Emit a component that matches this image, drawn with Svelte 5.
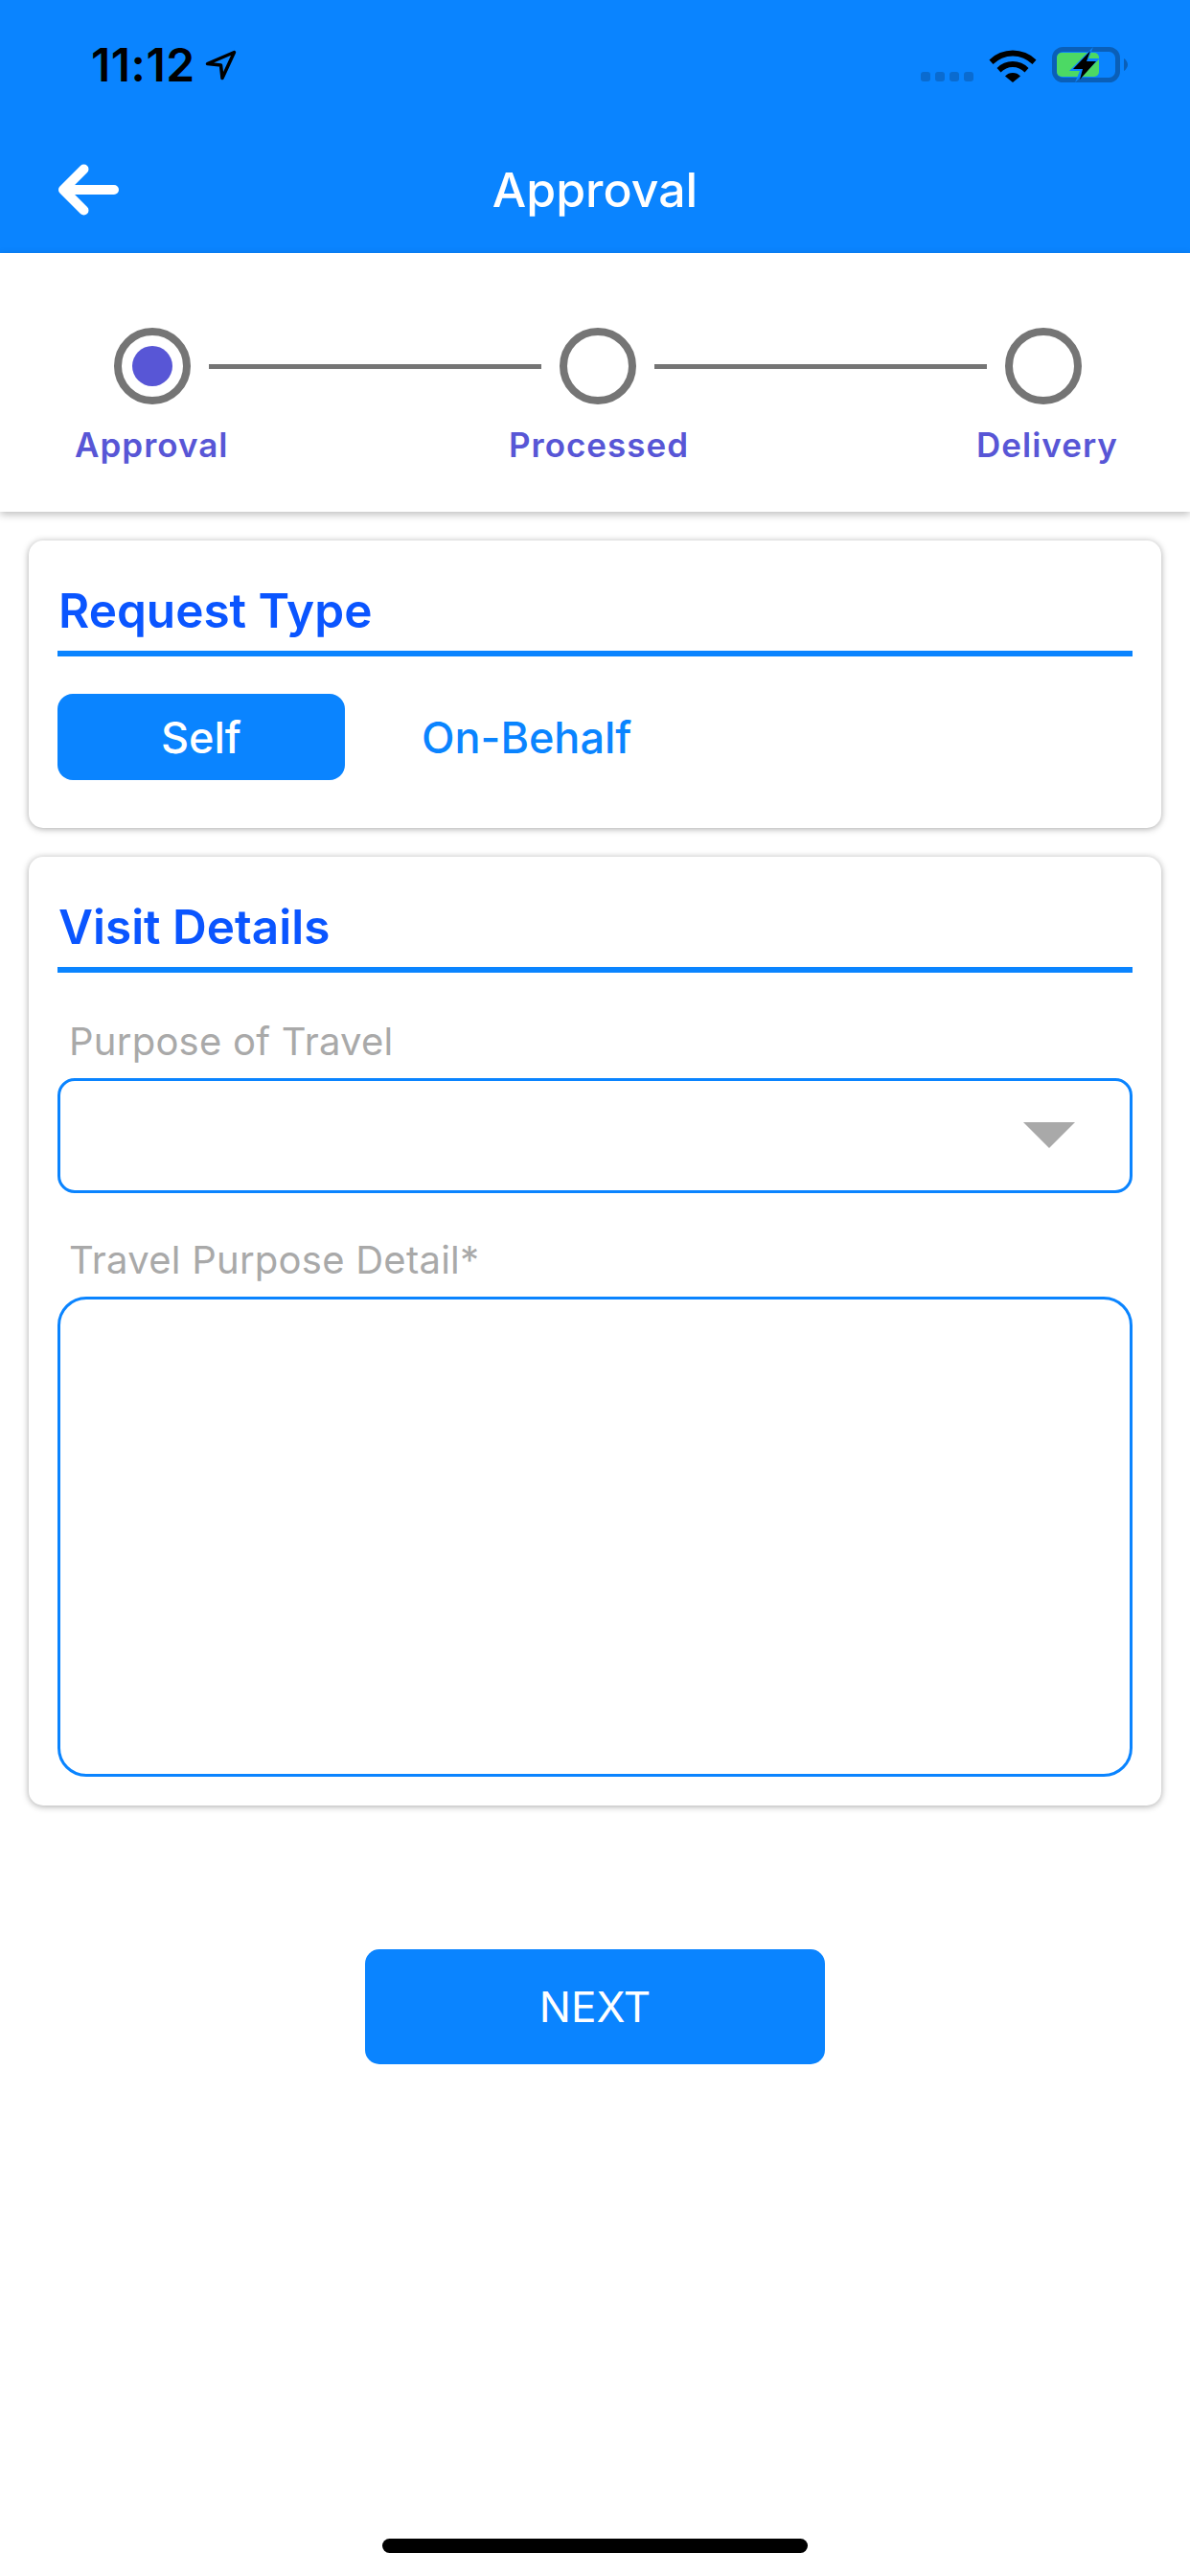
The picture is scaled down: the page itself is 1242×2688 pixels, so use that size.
<script>
  const steps = [
    { label: 'Approval', active: true },
    { label: 'Processed', active: false },
    { label: 'Delivery', active: false }
  ];
</script>

<div class="screen">
  <header class="appbar">
    <div class="status">
      <div class="status-left">
        <span class="time">11:12</span>
        <svg class="loc" width="34" height="32" viewBox="0 0 34 32">
          <path d="M30.500 2.500 L2.500 14.500 L16.500 16 L18 29.500 Z" fill="none" stroke="#000" stroke-width="3.500" stroke-linejoin="round" />
        </svg>
      </div>
      <div class="status-right">
        <div class="signal"><i></i><i></i><i></i><i></i></div>
        <svg width="50" height="37" viewBox="0 0 50 37">
          <path d="M0.500 13.500 A35 35 0 0 1 49.500 13.500 L45.500 18 A29 29 0 0 0 4.500 18 Z" fill="#000" />
          <path d="M8.500 22 A23 23 0 0 1 41.500 22 L37.500 26.500 A17 17 0 0 0 12.500 26.500 Z" fill="#000" />
          <path d="M17 30.500 A11 11 0 0 1 33 30.500 L25 37 Z" fill="#000" />
        </svg>
        <svg class="battery" width="79" height="37" viewBox="0 0 79 37">
          <rect x="2.500" y="2.500" width="66" height="32" rx="9" fill="none" stroke="#0a5fb8" stroke-width="5" />
          <path d="M75 12 C77 13 79 16 79 18.500 C79 21 77 24 75 25 Z" fill="#0a5fb8" />
          <rect x="5" y="6" width="44" height="25" rx="5" fill="#4cd964" />
          <path d="M43 0 L18 25 L29 25 L24 37 L50 12 L38 12 Z" fill="#0a84ff" />
          <path d="M40 4 L22 23 L32 23 L29 34 L46 15 L36 15 Z" fill="#000" />
        </svg>
      </div>
    </div>
    <div class="nav">
      <svg class="back" width="64" height="56" viewBox="0 0 64 56">
        <path d="M27.500 6.500 L6 28 L27.500 49.500 M6 28 L59 28" fill="none" stroke="#fff" stroke-width="10" stroke-linecap="round" stroke-linejoin="round" />
      </svg>
      <h1>Approval</h1>
    </div>
  </header>

  <section class="stepper">
    <div class="track">
      {#each steps as step, i}
        {#if i > 0}<span class="line"></span>{/if}
        <span class="circle">
          {#if step.active}<span class="dot"></span>{/if}
        </span>
      {/each}
    </div>
    <div class="labels">
      {#each steps as step}
        <span>{step.label}</span>
      {/each}
    </div>
  </section>

  <main class="content">
    <section class="card request">
      <h2>Request Type</h2>
      <div class="toggle">
        <button type="button" class="pill selected">Self</button>
        <button type="button" class="pill">On-Behalf</button>
      </div>
    </section>

    <section class="card details">
      <h2>Visit Details</h2>
      <div class="field-label first">Purpose of Travel</div>
      <div class="select">
        <span class="caret"></span>
      </div>
      <div class="field-label">Travel Purpose Detail*</div>
      <div class="textarea"></div>
    </section>

    <button type="button" class="next">NEXT</button>
  </main>

  <div class="home"></div>
</div>

<style>
  :global(body) {
    margin: 0;
    background: #fff;
  }

  .screen {
    width: 1242px;
    height: 2688px;
    display: flex;
    flex-direction: column;
    background: #fff;
    font-family: Inter, "Liberation Sans", sans-serif;
    overflow: hidden;
  }

  .appbar {
    height: 264px;
    background: #0a84ff;
    box-sizing: border-box;
    padding-top: 49px;
  }

  .status {
    display: flex;
    justify-content: space-between;
    align-items: flex-start;
    height: 38px;
    padding: 0 65px 0 95px;
  }

  .status-left {
    display: flex;
    align-items: center;
    gap: 10px;
  }

  .time {
    font-size: 48px;
    line-height: 38px;
    font-weight: 600;
    color: #000;
    letter-spacing: 0.5px;
  }

  .status-right {
    display: flex;
    align-items: flex-start;
    gap: 16px;
  }

  .signal {
    display: flex;
    gap: 5px;
    padding-top: 26px;
  }

  .signal i {
    width: 10px;
    height: 10px;
    border-radius: 3px;
    background: #0a6bd0;
  }

  .nav {
    display: flex;
    align-items: center;
    justify-content: center;
    position: relative;
    margin-top: 83px;
    height: 56px;
  }

  .back {
    position: absolute;
    left: 60px;
    top: 0;
  }

  h1 {
    margin: 0;
    font-size: 50px;
    font-weight: 500;
    color: #fff;
  }

  .stepper {
    height: 270px;
    box-sizing: border-box;
    padding-top: 78px;
    box-shadow: 0 3px 8px rgba(0, 0, 0, 0.25);
    position: relative;
  }

  .track {
    display: flex;
    align-items: center;
    padding: 0 113px 0 119px;
    gap: 19px;
  }

  .circle {
    width: 80px;
    height: 80px;
    box-sizing: border-box;
    border: 8px solid #757575;
    border-radius: 50%;
    display: flex;
    align-items: center;
    justify-content: center;
    flex: none;
  }

  .dot {
    width: 42px;
    height: 42px;
    border-radius: 50%;
    background: #5856d6;
  }

  .line {
    flex: 1;
    height: 5px;
    background: #757575;
  }

  .labels {
    display: grid;
    grid-template-columns: 162px 1fr 144px;
    margin: 20px 79px 0 78px;
    font-size: 35px;
    font-weight: 600;
    letter-spacing: 1px;
    color: #5856d6;
    line-height: 44px;
    white-space: nowrap;
  }

  .labels span:nth-child(2) {
    text-align: center;
    padding-right: 9px;
  }

  .content {
    flex: 1;
    display: flex;
    flex-direction: column;
    padding: 30px 30px 0;
  }

  .card {
    box-sizing: border-box;
    background: #fff;
    border-radius: 15px;
    padding: 46px 30px 0;
    box-shadow: 0 1px 7px rgba(0, 0, 0, 0.35);
  }

  .request {
    height: 300px;
  }

  .details {
    height: 990px;
    margin-top: 30px;
  }

  h2 {
    margin: 0;
    padding: 0 0 14px 1px;
    height: 55px;
    box-sizing: content-box;
    font-size: 49.500px;
    line-height: 55px;
    font-weight: 600;
    color: #0a55ff;
    border-bottom: 6px solid #0a84ff;
  }

  .toggle {
    display: flex;
    margin-top: 39px;
    gap: 0;
  }

  .pill {
    height: 90px;
    border: 0;
    padding: 0;
    background: none;
    font-family: inherit;
    font-size: 45px;
    font-weight: 500;
    color: #0a84ff;
  }

  .pill.selected {
    width: 300px;
    margin-right: 80px;
    background: #0a84ff;
    color: #fff;
    border-radius: 16px;
  }

  .field-label {
    margin: 46px 0 0 12px;
    height: 48px;
    font-size: 40px;
    line-height: 48px;
    letter-spacing: 0.25px;
    color: #a9a9a9;
  }

  .field-label.first {
    margin-top: 48px;
  }

  .select {
    margin-top: 14px;
    height: 120px;
    box-sizing: border-box;
    border: 3px solid #0a84ff;
    border-radius: 18px;
    display: flex;
    justify-content: flex-end;
    padding: 43px 57px 0 0;
  }

  .caret {
    width: 0;
    height: 0;
    border-left: 27px solid transparent;
    border-right: 27px solid transparent;
    border-top: 27px solid #a9a9a9;
  }

  .textarea {
    margin-top: 14px;
    height: 501px;
    box-sizing: border-box;
    border: 3px solid #0a84ff;
    border-radius: 30px;
  }

  .next {
    align-self: center;
    width: 480px;
    height: 120px;
    margin-top: 150px;
    border: 0;
    border-radius: 15px;
    background: #0a84ff;
    color: #fff;
    font-family: inherit;
    font-size: 44px;
  }

  .home {
    width: 444px;
    height: 15px;
    border-radius: 8px;
    background: #000;
    margin: 0 auto 24px;
  }
</style>
